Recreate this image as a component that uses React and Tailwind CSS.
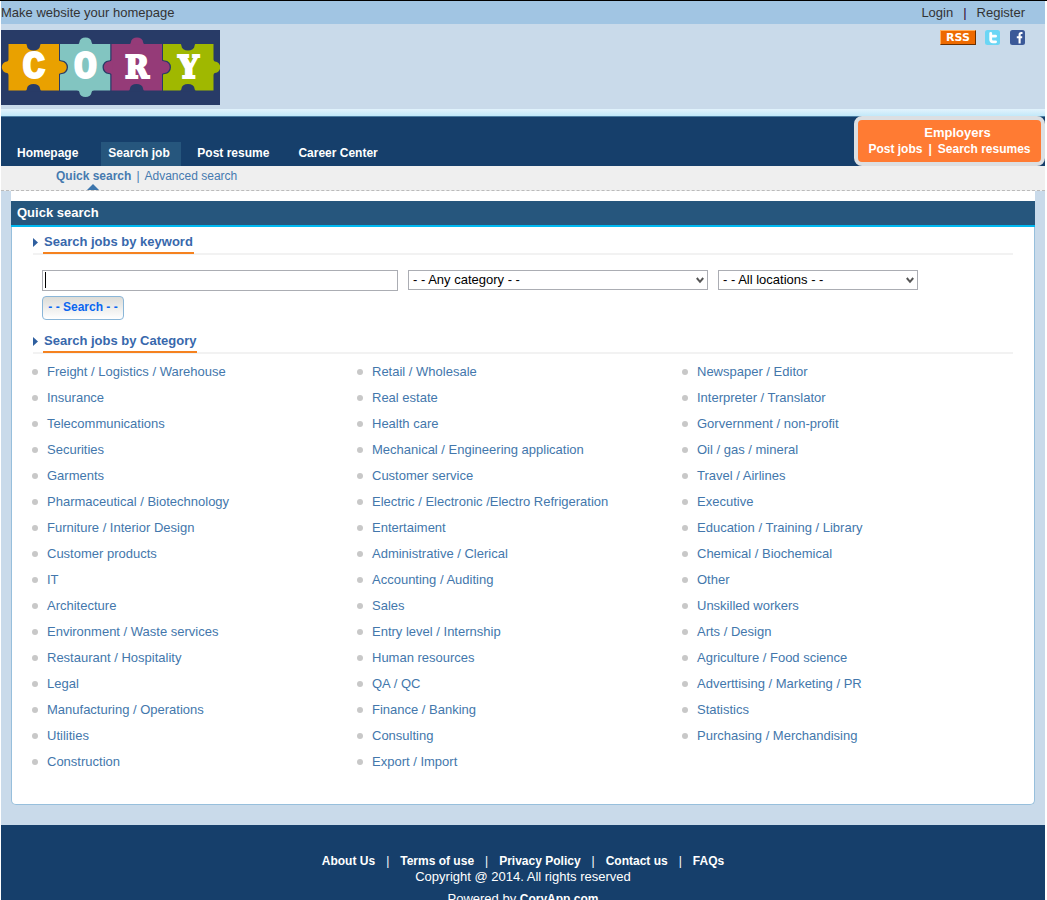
import React, { useState } from 'react';

const columns = [
  [
    'Freight / Logistics / Warehouse', 'Insurance', 'Telecommunications', 'Securities', 'Garments',
    'Pharmaceutical / Biotechnology', 'Furniture / Interior Design', 'Customer products', 'IT',
    'Architecture', 'Environment / Waste services', 'Restaurant / Hospitality', 'Legal',
    'Manufacturing / Operations', 'Utilities', 'Construction',
  ],
  [
    'Retail / Wholesale', 'Real estate', 'Health care', 'Mechanical / Engineering application',
    'Customer service', 'Electric / Electronic /Electro Refrigeration', 'Entertaiment',
    'Administrative / Clerical', 'Accounting / Auditing', 'Sales', 'Entry level / Internship',
    'Human resources', 'QA / QC', 'Finance / Banking', 'Consulting', 'Export / Import',
  ],
  [
    'Newspaper / Editor', 'Interpreter / Translator', 'Gorvernment / non-profit',
    'Oil / gas / mineral', 'Travel / Airlines', 'Executive', 'Education / Training / Library',
    'Chemical / Biochemical', 'Other', 'Unskilled workers', 'Arts / Design',
    'Agriculture / Food science', 'Adverttising / Marketing / PR', 'Statistics',
    'Purchasing / Merchandising',
  ],
];

const navItems = ['Homepage', 'Search job', 'Post resume', 'Career Center'];
const footerLinks = ['About Us', 'Terms of use', 'Privacy Policy', 'Contact us', 'FAQs'];

function Logo() {
  const navy = '#283b67';
  return (
    <svg width="219" height="75" viewBox="0 0 219 75" role="img" aria-label="Cory" className="block">
      <rect width="219" height="75" fill={navy} />
      <g stroke={navy} strokeWidth="1">
        <rect x="7" y="13.5" width="51.5" height="47.5" fill="#e9a100" />
        <rect x="58.5" y="13.5" width="51.5" height="47.5" fill="#82c5c1" />
        <rect x="110" y="13.5" width="51.5" height="47.5" fill="#953b78" />
        <rect x="161.5" y="13.5" width="51.5" height="47.5" fill="#a0b800" />
      </g>
      <g fill={navy}>
        <path d="M24 13h17q-2 1-2 3a6.500 4.500 0 0 1-13 0q0-2-2-3z" />
        <path d="M24 61.500h17q-2-1-2-3a6.500 4.500 0 0 0-13 0q0 2-2 3z" />
        <path d="M127 61.500h17q-2-1-2-3a6.500 4.500 0 0 0-13 0q0 2-2 3z" />
        <path d="M178.500 13h17q-2 1-2 3a6.500 4.500 0 0 1-13 0q0-2-2-3z" />
        <path d="M178.500 61.500h17q-2-1-2-3a6.500 4.500 0 0 0-13 0q0 2-2 3z" />
        <path d="M58.500 29.500q1 1 2.500 1a6 6.700 0 0 1 0 13.400q-1.500 0-2.500 1z" />
        <path d="M110 29.500q-1 1-2.500 1a6 6.700 0 0 0 0 13.400q1.500 0 2.500 1z" />
        <path d="M161.500 29.500q1 1 2.500 1a6 6.700 0 0 1 0 13.400q-1.500 0-2.500 1z" />
      </g>
      <path d="M8 29.500q-1 2-2 2a5.200 5.700 0 0 0 0 11.400q1 0 2 2z" fill="#e9a100" />
      <path d="M57 29.500q1.500 2 3.500 2a5.200 5.700 0 0 1 0 11.400q-2 0-3.500 2z" fill="#e9a100" />
      <path d="M76 14.500q2.500-.5 2.500-2.500a6 4.500 0 0 1 12 0q0 2 2.500 2.500z" fill="#82c5c1" />
      <path d="M76 60q2.500.5 2.500 2.500a6 4.500 0 0 0 12 0q0-2 2.500-2.500z" fill="#82c5c1" />
      <path d="M111.500 29.500q-1.500 2-3.500 2a5.200 5.700 0 0 0 0 11.400q2 0 3.500 2z" fill="#953b78" />
      <path d="M127.500 14.500q2.500-.5 2.500-2.500a6 4.500 0 0 1 12 0q0 2 2.500 2.500z" fill="#953b78" />
      <path d="M160 29.500q1.500 2 3.500 2a5.200 5.700 0 0 1 0 11.400q-2 0-3.500 2z" fill="#953b78" />
      <path d="M212 29.500q1 2 2 2a5.200 5.700 0 0 1 0 11.400q-1 0-2 2z" fill="#a0b800" />
      <g fill="#fff" stroke="#fff" fontWeight="700" textAnchor="middle">
        <g strokeWidth="2" fontSize="38" fontFamily="'Liberation Mono', monospace">
          <text x="33" y="48">C</text>
          <text x="84.500" y="48">O</text>
        </g>
        <g strokeWidth="2" fontSize="32" fontFamily="'DejaVu Serif Condensed', 'DejaVu Serif', serif">
          <text x="136" y="48">R</text>
          <text x="187.500" y="48">Y</text>
        </g>
      </g>
    </svg>
  );
}

function SectionTitle({ children }) {
  return (
    <div className="border-b-2 border-[#f2f2f2]">
      <h2 className="relative -mb-px flex items-start pl-2.5 text-[13px] leading-5 font-bold text-[#3868ac]">
        <svg width="5" height="9" viewBox="0 0 5 9" className="absolute top-1.5 left-0" aria-hidden="true">
          <path d="M0 0L5 4.500L0 9z" fill="#2f5f9f" />
        </svg>
        <span className="block border-b-2 border-[#f5821f] px-px">{children}</span>
      </h2>
    </div>
  );
}

function Dropdown({ label, text, width }) {
  return (
    <div className={`relative ${width}`}>
      <select
        aria-label={label}
        className="block h-5 w-full appearance-none border border-[#abadb3] bg-white px-1 text-[13px] leading-[18px] text-black outline-none"
      >
        <option>{text}</option>
      </select>
      <svg width="8" height="7" viewBox="0 0 8 7" className="pointer-events-none absolute top-[7px] right-1" aria-hidden="true">
        <path d="M.8 1L4 4.800L7.200 1" fill="none" stroke="#555" strokeWidth="2" />
      </svg>
    </div>
  );
}

export default function App() {
  const [keyword, setKeyword] = useState('');

  return (
    <div className="min-h-screen border-t border-black bg-white pr-0.5 pl-px font-['Liberation_Sans',Arial,sans-serif] text-[13px] leading-4 text-[#333]">
      <div className="bg-[#c9daea]">
        <div className="flex h-[23px] items-center justify-between bg-[#a1c5e3] pr-5">
          <a href="#home">Make website your homepage</a>
          <div className="flex gap-2.5">
            <a href="#login">Login</a>
            <span className="text-[#303]">|</span>
            <a href="#register">Register</a>
          </div>
        </div>

        <header className="flex h-[85px] items-start justify-between pt-1.5 pr-5">
          <a href="#home"><Logo /></a>
          <div className="flex gap-[9px]">
            <a
              href="#rss"
              className="flex h-[15px] w-9 items-center justify-center border border-t-[#ffb060] border-r-[#6b3000] border-b-[#6b3000] border-l-[#ffb060] bg-[#ee6a00] font-['DejaVu_Sans',sans-serif] text-[11px] leading-3 font-bold text-white"
            >
              RSS
            </a>
            <a href="#twitter" aria-label="Twitter">
              <svg width="15" height="15" viewBox="0 0 15 15">
                <rect width="15" height="15" rx="2.500" fill="#6bd6f5" />
                <path d="M5.700 3.300V9.500a2.300 2.300 0 0 0 2.300 2.300h2.600M5.700 6.200h4.900" fill="none" stroke="#fff" strokeWidth="2.800" strokeLinecap="round" strokeLinejoin="round" />
              </svg>
            </a>
            <a href="#facebook" aria-label="Facebook">
              <svg width="16" height="15" viewBox="0 0 16 15">
                <rect x="1" width="15" height="15" rx="2.500" fill="#3b5998" />
                <path d="M13.500 3h-1.200q-1.700 0-1.700 1.800V13.500M7.800 7.300h5.400" fill="none" stroke="#fff" strokeWidth="2.100" />
              </svg>
            </a>
          </div>
        </header>

        <div className="h-[7px] bg-linear-to-b from-[#e2f3fc] to-[#c2e8f9]" />

        <div className="flex h-[50px] justify-between border-t border-[#4c7ea3] bg-[#163f6b]">
          <nav className="flex items-end gap-[11px] pl-[9px] text-[12px] font-bold text-white">
            {navItems.map((item) => (
              <a
                key={item}
                href="#nav"
                className={
                  item === 'Search job'
                    ? 'ml-1.5 flex h-6 w-20 items-center bg-[#26567d] pb-0.5 pl-[7px]'
                    : 'flex h-6 items-center px-[5px] pb-0.5 first:pr-1.5 first:pl-[7px] last:ml-2'
                }
              >
                {item}
              </a>
            ))}
          </nav>
          <div className="-mt-px flex h-[50px] w-[191px] flex-col items-center justify-center rounded-lg border-4 border-[#dcdfe2] bg-[#ff7b33] font-bold whitespace-nowrap text-white">
            <a href="#employers" className="pl-4">Employers</a>
            <div className="flex gap-1.5 text-[12px]">
              <a href="#post-jobs">Post jobs</a>
              <span>|</span>
              <a href="#search-resumes">Search resumes</a>
            </div>
          </div>
        </div>

        <div className="relative flex h-[25px] items-start gap-[5px] border-b border-dashed border-[#bbb] bg-[#efefef] pt-0.5 pl-[55px] text-[12px] text-[#467aaf]">
          <a href="#quick" className="font-bold">Quick search</a>
          <span>|</span>
          <a href="#advanced">Advanced search</a>
          <svg width="12" height="6" viewBox="0 0 12 6" className="absolute bottom-0 left-[86px]" aria-hidden="true">
            <path d="M6 0L12 6H0z" fill="#3d76ad" />
          </svg>
        </div>

        <main className="px-2.5 pb-5">
          <div className="h-2.5 bg-white" />
          <h1 className="flex h-[26px] items-center border-b-2 border-[#00b8f0] bg-[#26567d] pl-1.5 text-[13px] font-bold text-white">
            Quick search
          </h1>
          <div className="rounded-b-[5px] border border-t-0 border-[#97bfdc] bg-white px-[21px] pt-[5px] pb-[29px]">
            <SectionTitle>Search jobs by keyword</SectionTitle>
            <form className="px-[9px] pt-[15px] pb-[11px]" onSubmit={(e) => e.preventDefault()}>
              <div className="flex flex-wrap gap-2.5">
                <div className="relative w-[356px]">
                  <input
                    aria-label="Keyword"
                    type="text"
                    value={keyword}
                    onChange={(e) => setKeyword(e.target.value)}
                    className="block h-[21px] w-full border border-[#abadb3] bg-white px-1 text-[13px] text-black outline-none"
                  />
                  {keyword === '' && <span className="pointer-events-none absolute top-0.5 left-[3px] h-4 w-px bg-black" />}
                </div>
                <Dropdown label="Category" text="- - Any category - -" width="w-[300px]" />
                <Dropdown label="Location" text="- - All locations - -" width="w-[200px]" />
              </div>
              <button
                type="submit"
                className="mt-[5px] block h-6 w-[82px] rounded-[4px] border border-[#8ab6d8] bg-linear-to-b from-[#dcdcd8] to-white pb-0.5 text-[12px] leading-4 font-bold whitespace-nowrap text-[#0a66f0]"
              >
                - - Search - -
              </button>
            </form>
            <SectionTitle>Search jobs by Category</SectionTitle>
            <div className="grid grid-cols-[325px_325px_1fr] pt-[5px]">
              {columns.map((column) => (
                <ul key={column[0]}>
                  {column.map((name) => (
                    <li key={name} className="flex h-[26px] items-center gap-[9px]">
                      <span className="-ml-px size-1.5 rounded-full bg-[#c8c8c8]" />
                      <a href="#category" className="text-[#4377ac]">{name}</a>
                    </li>
                  ))}
                </ul>
              ))}
            </div>
          </div>
        </main>
      </div>

      <footer className="bg-[#163f6b] pt-7 text-center text-white">
        <div className="flex justify-center gap-[11px] text-[12px] font-bold">
          {footerLinks.map((link, i) => (
            <React.Fragment key={link}>
              {i > 0 && <span className="font-normal">|</span>}
              <a href="#footer">{link}</a>
            </React.Fragment>
          ))}
        </div>
        <p>Copyright @ 2014. All rights reserved</p>
        <p className="pt-1.5">
          Powered by <a href="#coryapp" className="text-[12px] font-bold">CoryApp.com</a>
        </p>
      </footer>
    </div>
  );
}
